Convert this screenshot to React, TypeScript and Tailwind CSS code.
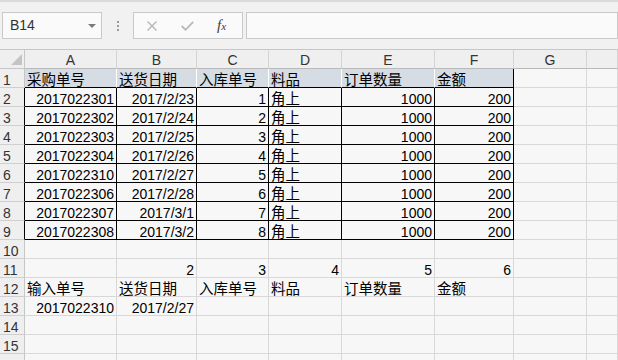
import React from "react";

const COLS = [92, 80, 72, 73, 93, 79, 73];
const LETTERS = ["A", "B", "C", "D", "E", "F", "G", ""];

type Cell = { v: string; right?: boolean; cjk?: boolean } | null;

const HEAD = ["采购单号", "送货日期", "入库单号", "料品", "订单数量", "金额"];

const DATA: [string, string, string][] = [
  ["2017022301", "2017/2/23", "1"],
  ["2017022302", "2017/2/24", "2"],
  ["2017022303", "2017/2/25", "3"],
  ["2017022304", "2017/2/26", "4"],
  ["2017022310", "2017/2/27", "5"],
  ["2017022306", "2017/2/28", "6"],
  ["2017022307", "2017/3/1", "7"],
  ["2017022308", "2017/3/2", "8"],
];

function buildRows(): Cell[][] {
  const rows: Cell[][] = [];
  rows.push(HEAD.map((v) => ({ v, cjk: true })));
  DATA.forEach(([id, date, n]) => {
    rows.push([
      { v: id, right: true },
      { v: date, right: true },
      { v: n, right: true },
      { v: "角上", cjk: true },
      { v: "1000", right: true },
      { v: "200", right: true },
    ]);
  });
  rows.push([]);
  rows.push([null, { v: "2", right: true }, { v: "3", right: true }, { v: "4", right: true }, { v: "5", right: true }, { v: "6", right: true }]);
  rows.push(["输入单号", "送货日期", "入库单号", "料品", "订单数量", "金额"].map((v) => ({ v, cjk: true })));
  rows.push([{ v: "2017022310", right: true }, { v: "2017/2/27", right: true }]);
  rows.push([]);
  rows.push([]);
  rows.push([]);
  return rows;
}

function cellClass(r: number, c: number) {
  // r is 1-based sheet row, c is 0-based column (A = 0)
  if (r === 1 && c <= 5) {
    return c < 5
      ? "bg-[#d6dce4] border-r border-b border-r-white border-b-black"
      : "bg-[#d6dce4] border-r border-b border-r-black border-b-black";
  }
  if (r >= 2 && r <= 9 && c <= 5) {
    return "bg-[#f7f7f7] border-r border-b border-black";
  }
  return "bg-[#f7f7f7] border-r border-b border-[#d8d8d8]";
}

function FormulaBar() {
  return (
    <div className="h-[49px] bg-[#f1f1f1] border-t-2 border-[#dadada] pt-[10px] flex items-start">
      <div className="ml-[2px] w-[100px] h-[27px] bg-[#fafafa] border border-[#c9c9c9] flex items-center pl-[7px] pr-[5px]">
        <span className="text-[14px] text-[#333] flex-1">B14</span>
        <svg width="8" height="4" viewBox="0 0 8 4">
          <path d="M0 0 L8 0 L4 4 Z" fill="#7a7a7a" />
        </svg>
      </div>
      <div className="w-[31px] h-[27px] flex flex-col items-center justify-center gap-[2px]">
        <span className="w-[2px] h-[2px] bg-[#9a9a9a]" />
        <span className="w-[2px] h-[2px] bg-[#9a9a9a]" />
        <span className="w-[2px] h-[2px] bg-[#9a9a9a]" />
      </div>
      <div className="w-[110px] h-[27px] bg-[#fafafa] border border-[#c9c9c9] flex items-center">
        <svg className="ml-[13px]" width="10" height="10" viewBox="0 0 10 10">
          <path d="M0.5 0.5 L9.5 9.5 M9.5 0.5 L0.5 9.5" stroke="#b5b5b5" strokeWidth="1.4" />
        </svg>
        <svg className="ml-[24px]" width="13" height="10" viewBox="0 0 13 10">
          <path d="M0.8 5 L4.5 8.8 L12.2 0.8" stroke="#b8b8b8" strokeWidth="1.8" fill="none" />
        </svg>
        <span className="ml-[23px] font-['Liberation_Serif',serif] italic text-[#3c3c3c] leading-none">
          <span className="text-[15px]">f</span>
          <span className="text-[11px]">x</span>
        </span>
      </div>
      <div className="ml-[3px] flex-1 h-[27px] bg-[#fafafa] border border-[#c9c9c9]" />
    </div>
  );
}

export default function App() {
  const rows = buildRows();
  return (
    <div className="w-[618px] h-[360px] overflow-hidden bg-[#f7f7f7] font-['Liberation_Sans','Noto_Sans_CJK_SC',sans-serif] text-[14px] text-black">
      <FormulaBar />
      <div className="grid grid-cols-[25px_92px_80px_72px_73px_93px_79px_73px_1fr]">
        {/* column headers */}
        <div className="h-[20px] bg-[#efefef] border-t border-r border-b border-[#c6c6c6] relative">
          <svg className="absolute left-[11px] top-[4px]" width="11" height="11" viewBox="0 0 11 11">
            <path d="M11 0 L11 11 L0 11 Z" fill="#c4c4c4" />
          </svg>
        </div>
        {LETTERS.map((l, i) => (
          <div
            key={i}
            className="h-[20px] bg-[#efefef] border-t border-r border-b border-t-[#c6c6c6] border-r-[#d4d4d4] border-b-[#b9b9b9] text-center leading-[18px] pt-[1px] text-[#333]"
          >
            {l}
          </div>
        ))}
        {rows.map((row, ri) => {
          const r = ri + 1;
          const black = r >= 2 && r <= 9;
          return (
            <React.Fragment key={r}>
              <div
                className={
                  black
                    ? "h-[19px] bg-[#efefef] border-r border-b border-r-black border-b-[#cfcfcf] pl-[3px] leading-[18px] pt-[2px] text-[#333]"
                    : "h-[19px] bg-[#efefef] border-r border-b border-r-[#c6c6c6] border-b-[#cfcfcf] pl-[3px] leading-[18px] pt-[2px] text-[#333]"
                }
              >
                {r}
              </div>
              {COLS.concat([0]).map((_, c) => {
                const cell = row[c];
                return (
                  <div
                    key={c}
                    className={`h-[19px] px-[2px] leading-[18px] pt-[2px] whitespace-nowrap ${cellClass(r, c)} ${
                      cell && cell.right ? "text-right" : "text-left"
                    }`}
                  >
                    {cell ? cell.cjk ? <span className="text-[14.5px]">{cell.v}</span> : cell.v : ""}
                  </div>
                );
              })}
            </React.Fragment>
          );
        })}
      </div>
    </div>
  );
}
